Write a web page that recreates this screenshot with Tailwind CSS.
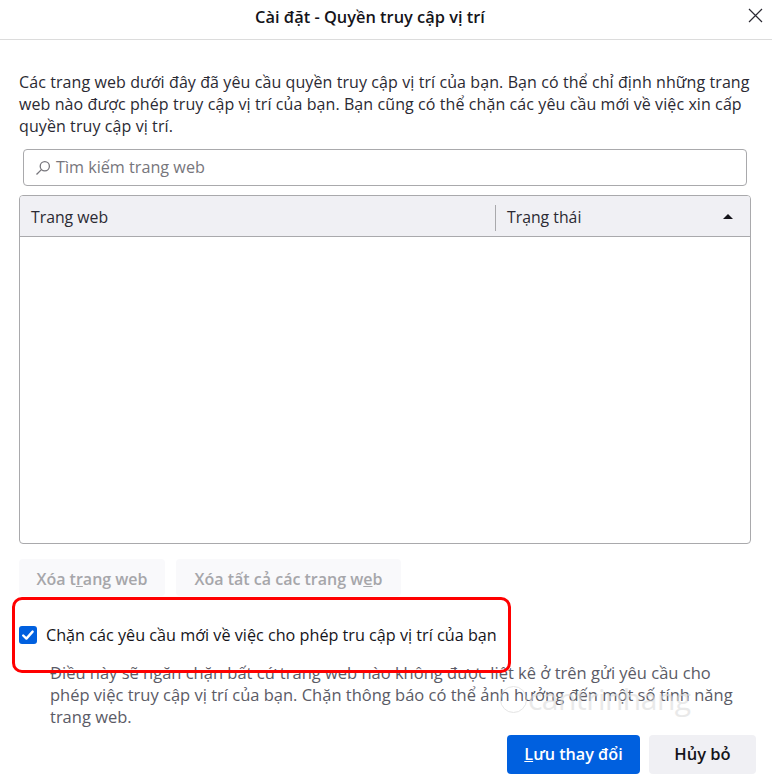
<!DOCTYPE html>
<html>
<head>
<meta charset="utf-8">
<script src="https://cdn.jsdelivr.net/npm/@tailwindcss/browser@4"></script>
</head>
<body class="bg-white">
<div class="relative flex h-[784px] w-[772px] flex-col overflow-hidden bg-white font-['Open_Sans','Noto_Sans',sans-serif] text-[#15141a]">
  <header class="relative flex h-[40px] shrink-0 items-center justify-center border-b border-[#dcdcdc] pr-[32px] pb-[4px]">
    <h1 class="text-[16.4px] font-semibold">Cài đặt - Quyền truy cập vị trí</h1>
    <svg class="absolute right-[9px] top-[8px] h-[15px] w-[15px]" viewBox="0 0 15 15" fill="none" stroke="#2b2a33" stroke-width="1.2"><path d="M1 1l13 13M14 1L1 14"/></svg>
  </header>
  <main class="flex flex-1 flex-col pl-[19px] pr-[21px]">
    <p class="mt-[31px] w-[734px] text-[16px] leading-[22px] tracking-[0.09px] text-[#2b2a33]">Các trang web dưới đây đã yêu cầu quyền truy cập vị trí của bạn. Bạn có thể chỉ định những trang web nào được phép truy cập vị trí của bạn. Bạn cũng có thể chặn các yêu cầu mới về việc xin cấp quyền truy cập vị trí.</p>
    <div class="mx-[4px] mt-[12px] flex h-[37px] items-center gap-[5px] rounded-[4px] border border-[#a9a9ac] pl-[11px]">
      <svg class="h-[16px] w-[16px]" viewBox="0 0 16 16" fill="none" stroke="#77767c" stroke-width="1.3"><circle cx="9.8" cy="6.2" r="4.6"/><path d="M6.4 9.6L1.5 14.5"/></svg>
      <span class="text-[16.2px] text-[#77767c]">Tìm kiếm trang web</span>
    </div>
    <section class="mt-[9px] flex h-[349px] flex-col rounded-[4px] border border-[#a9a9ac]">
      <div class="flex h-[41px] items-center rounded-t-[3px] border-b border-[#a9a9ac] bg-[#f0f0f4] pt-[3px] text-[15.8px] text-[#2b2a33]">
        <div class="w-[475px] pl-[11px]">Trang web</div>
        <div class="flex h-[26px] flex-1 items-center justify-between border-l border-[#a9a9ac] pl-[11px] pr-[17px]">
          <span>Trạng thái</span>
          <span class="mb-[3px] h-0 w-0 border-x-[5px] border-b-[5px] border-x-transparent border-b-[#15141a]"></span>
        </div>
      </div>
      <div class="flex-1"></div>
    </section>
    <div class="mt-[15px] flex gap-[11px] text-[16px] font-semibold text-[#a6a6aa]">
      <button class="h-[37px] w-[146px] rounded-[4px] bg-[#f9f9fb] pt-[2px]">Xóa <span>t<u>r</u>ang</span> web</button>
      <button class="h-[37px] w-[225px] rounded-[4px] bg-[#f9f9fb] pt-[2px]">Xóa tất cả các trang w<u>e</u>b</button>
    </div>
    <label class="mt-[28px] flex items-center gap-[9px]">
      <span class="flex h-[18px] w-[18px] items-center justify-center rounded-[3px] bg-[#0060df]">
        <svg class="h-[14px] w-[14px]" viewBox="0 0 14 14" fill="none" stroke="#fff" stroke-width="2.4" stroke-linecap="round" stroke-linejoin="round"><path d="M2.2 7.5l3.2 3.1 6.2-7"/></svg>
      </span>
      <span class="text-[16.2px] leading-[22px] text-[#15141a]">Chặn các yêu cầu mới về việc cho phép tru cập vị trí của bạn</span>
    </label>
    <p class="ml-[31px] mt-[16px] w-[700px] text-[16.5px] leading-[22px] text-[#5b5b66]">Điều này sẽ ngăn chặn bất cứ trang web nào không được liệt kê ở trên gửi yêu cầu cho phép việc truy cập vị trí của bạn. Chặn thông báo có thể ảnh hưởng đến một số tính năng trang web.</p>
    <div class="mt-auto mb-[10px] mr-[-5px] flex justify-end gap-[9px] text-[16.2px] font-semibold">
      <button class="h-[39px] w-[133px] rounded-[4px] bg-[#0060df] text-white"><u>L</u>ưu thay đổi</button>
      <button class="h-[39px] w-[107px] rounded-[4px] bg-[#f0f0f4] text-[16.5px] text-[#15141a]">Hủy bỏ</button>
    </div>
  </main>
  <div class="absolute left-[12px] top-[597px] h-[76px] w-[499px] rounded-[10px] border-[3px] border-[#ff0000]"></div>
  <div class="absolute left-[500px] top-[681px] flex items-center gap-[1px] opacity-60">
    <span class="h-[27px] w-[27px] rounded-full border border-[#d4d4d4]"></span>
    <span class="text-[30px] leading-[36px] tracking-[-0.5px] text-[#dcdcdc]">cantrinhang</span>
  </div>
</div>
</body>
</html>
